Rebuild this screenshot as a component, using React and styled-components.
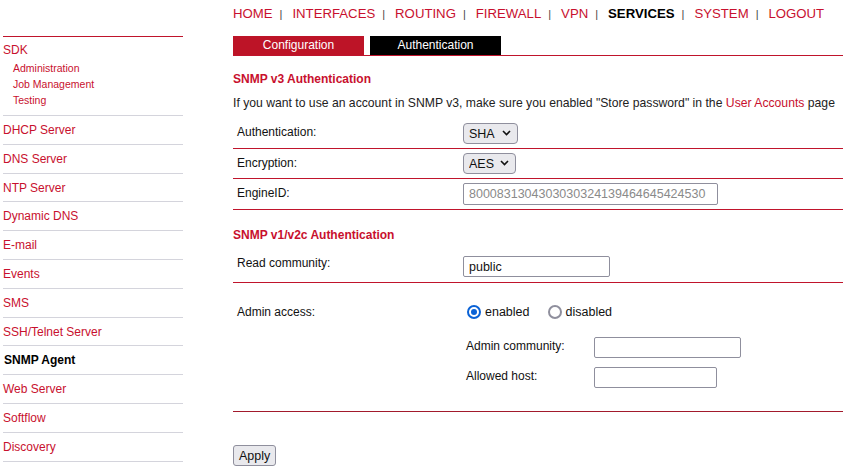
import React from "react";
import styled, { createGlobalStyle } from "styled-components";

const RED = "#c8102e";
const LINE = "#c0142c";

const Global = createGlobalStyle`
  html, body { margin: 0; padding: 0; background: #fff; }
  body { font-family: "Liberation Sans", Arial, sans-serif; color: #111; }
  * { box-sizing: border-box; }
`;

const Page = styled.div`
  display: flex;
  align-items: flex-start;
  padding-left: 3px;
  width: 843px;
  height: 471px;
  overflow: hidden;
`;

const Sidebar = styled.nav`
  width: 180px;
  flex: none;
  margin-top: 36px;
  border-top: 1px solid ${LINE};
`;

const Group = styled.div`
  padding: 4px 0 7px;
  border-bottom: 1px solid #d4d4dc;
`;

const GroupTitle = styled.div`
  font-size: 12px;
  line-height: 18px;
  color: ${RED};
  margin-bottom: 1px;
`;

const SubItem = styled.div`
  font-size: 10.5px;
  line-height: 16px;
  padding-left: 10px;
  color: ${RED};
`;

const SideItem = styled.div`
  height: 28.8px;
  line-height: 28px;
  font-size: 12px;
  border-bottom: 1px solid #d4d4dc;
  color: ${(p) => (p.$active ? "#000" : RED)};
  font-weight: ${(p) => (p.$active ? "bold" : "normal")};
  padding-left: ${(p) => (p.$active ? "1px" : "0")};
`;

const Main = styled.main`
  flex: 1;
  margin-left: 50px;
`;

const TopNav = styled.div`
  display: flex;
  align-items: center;
  height: 28px;
  font-size: 13.2px;
  padding-bottom: 1px;
`;

const NavLink = styled.span`
  color: ${(p) => (p.$active ? "#000" : RED)};
  font-weight: ${(p) => (p.$active ? "bold" : "normal")};
`;

const NavSep = styled.span`
  color: #444;
  font-size: 11px;
  margin: 0 10px 0 7px;
`;

const Tabs = styled.div`
  display: flex;
  gap: 6px;
  margin-top: 8px;
  border-bottom: 1px solid ${LINE};
`;

const Tab = styled.div`
  width: 131px;
  height: 19px;
  line-height: 18px;
  text-align: center;
  color: #fff;
  font-size: 12px;
  background: ${(p) => (p.$active ? "#000" : "#bd1427")};
`;

const SectionTitle = styled.div`
  font-size: 12px;
  font-weight: bold;
  color: ${RED};
  line-height: 16px;
  margin-top: ${(p) => p.$mt}px;
`;

const Desc = styled.div`
  font-size: 12.2px;
  color: #222;
  line-height: 16px;
  margin-top: 8px;
  white-space: nowrap;
`;

const DescLink = styled.span`
  color: ${RED};
`;

const Table = styled.div`
  margin-top: 7px;
`;

const Row = styled.div`
  display: flex;
  align-items: flex-start;
  height: ${(p) => p.$h || 31}px;
  border-bottom: ${(p) => (p.$noLine ? "none" : `1px solid ${LINE}`)};
  padding-top: ${(p) => p.$pt ?? 5}px;
`;

const Label = styled.div`
  width: 230px;
  padding-left: 4px;
  padding-top: ${(p) => p.$pt ?? 0}px;
  font-size: 12px;
  line-height: 14px;
  color: #111;
`;

const Control = styled.div`
  display: flex;
  align-items: center;
`;

const SelectWrap = styled.div`
  position: relative;
  width: ${(p) => p.$w}px;
  height: 21px;
`;

const Select = styled.select`
  appearance: none;
  -webkit-appearance: none;
  width: 100%;
  height: 100%;
  margin: 0;
  padding: 0 0 0 5px;
  font-family: "Liberation Sans", Arial, sans-serif;
  font-size: 12.5px;
  color: #111;
  background: #e9e9ed;
  border: 1px solid #8f8f9d;
  border-radius: 4px;
`;

const Chevron = styled.svg`
  position: absolute;
  right: 7px;
  top: 7px;
  pointer-events: none;
`;

const TextInput = styled.input`
  width: ${(p) => p.$w}px;
  height: ${(p) => p.$h || 21}px;
  margin: 0;
  padding: 0 5px;
  border: 1px solid #8f8f9d;
  border-radius: 2px;
  font-family: "Liberation Sans", Arial, sans-serif;
  font-size: 12.5px;
  color: ${(p) => (p.$muted ? "#8a8a8a" : "#111")};
  background: #fff;
  outline: none;
`;

const RadioGroup = styled.div`
  display: flex;
  align-items: center;
  padding-left: 4px;
  gap: 18px;
`;

const RadioOption = styled.label`
  display: flex;
  align-items: center;
  gap: 4px;
  font-size: 12.5px;
  color: #111;
`;

const RadioCircle = styled.span`
  width: 14px;
  height: 14px;
  border-radius: 50%;
  border: 2px solid ${(p) => (p.$on ? "#0a62d6" : "#8f8f9d")};
  display: flex;
  align-items: center;
  justify-content: center;
  &::after {
    content: "";
    width: 6px;
    height: 6px;
    border-radius: 50%;
    background: ${(p) => (p.$on ? "#0a62d6" : "transparent")};
  }
`;

const SubForm = styled.div`
  padding-left: 233px;
  padding-top: 16px;
  display: flex;
  flex-direction: column;
  gap: 9px;
`;

const SubRow = styled.div`
  display: flex;
  align-items: flex-start;
`;

const SubLabel = styled.div`
  width: 128px;
  font-size: 12px;
  line-height: 14px;
  padding-top: 2px;
  color: #111;
`;

const Divider = styled.div`
  border-top: 1px solid #a21a2c;
  margin-top: 23px;
`;

const ApplyButton = styled.button`
  margin-top: 33px;
  height: 21px;
  padding: 0 5px;
  font-family: "Liberation Sans", Arial, sans-serif;
  font-size: 12.5px;
  color: #111;
  background: #e9e9ed;
  border: 1px solid #8f8f9d;
  border-radius: 3px;
`;

const ChevronIcon = () => (
  <Chevron width="9" height="6" viewBox="0 0 9 6">
    <path d="M1 1 L4.5 4.5 L8 1" fill="none" stroke="#111" strokeWidth="1.6" />
  </Chevron>
);

const navItems = ["HOME", "INTERFACES", "ROUTING", "FIREWALL", "VPN", "SERVICES", "SYSTEM", "LOGOUT"];
const sideItems = [
  "DHCP Server",
  "DNS Server",
  "NTP Server",
  "Dynamic DNS",
  "E-mail",
  "Events",
  "SMS",
  "SSH/Telnet Server",
  "SNMP Agent",
  "Web Server",
  "Softflow",
  "Discovery",
];

export default function App() {
  return (
    <>
      <Global />
      <Page>
        <Sidebar>
          <Group>
            <GroupTitle>SDK</GroupTitle>
            <SubItem>Administration</SubItem>
            <SubItem>Job Management</SubItem>
            <SubItem>Testing</SubItem>
          </Group>
          {sideItems.map((s) => (
            <SideItem key={s} $active={s === "SNMP Agent"}>
              {s}
            </SideItem>
          ))}
        </Sidebar>
        <Main>
          <TopNav>
            {navItems.map((n, i) => (
              <React.Fragment key={n}>
                <NavLink $active={n === "SERVICES"}>{n}</NavLink>
                {i < navItems.length - 1 && <NavSep>|</NavSep>}
              </React.Fragment>
            ))}
          </TopNav>
          <Tabs>
            <Tab>Configuration</Tab>
            <Tab $active>Authentication</Tab>
          </Tabs>

          <SectionTitle $mt={15}>SNMP v3 Authentication</SectionTitle>
          <Desc>
            If you want to use an account in SNMP v3, make sure you enabled "Store password" in the{" "}
            <DescLink>User Accounts</DescLink> page
          </Desc>

          <Table>
            <Row $pt={5}>
              <Label $pt={2}>Authentication:</Label>
              <Control>
                <SelectWrap $w={55}>
                  <Select defaultValue="SHA">
                    <option>SHA</option>
                    <option>MD5</option>
                  </Select>
                  <ChevronIcon />
                </SelectWrap>
              </Control>
            </Row>
            <Row $h={30} $pt={4}>
              <Label $pt={3}>Encryption:</Label>
              <Control>
                <SelectWrap $w={53}>
                  <Select defaultValue="AES">
                    <option>AES</option>
                    <option>DES</option>
                  </Select>
                  <ChevronIcon />
                </SelectWrap>
              </Control>
            </Row>
            <Row $h={31} $pt={4}>
              <Label $pt={3}>EngineID:</Label>
              <Control>
                <TextInput $w={255} $h={22} $muted readOnly value="8000831304303030324139464645424530" />
              </Control>
            </Row>

            <SectionTitle $mt={17}>SNMP v1/v2c Authentication</SectionTitle>
            <Row $h={40} $pt={13}>
              <Label $pt={0}>Read community:</Label>
              <Control>
                <TextInput $w={147} readOnly value="public" />
              </Control>
            </Row>

            <Row $h={38} $pt={22} $noLine>
              <Label>Admin access:</Label>
              <RadioGroup>
                <RadioOption>
                  <RadioCircle $on />
                  enabled
                </RadioOption>
                <RadioOption>
                  <RadioCircle />
                  disabled
                </RadioOption>
              </RadioGroup>
            </Row>
            <SubForm>
              <SubRow>
                <SubLabel>Admin community:</SubLabel>
                <TextInput $w={147} readOnly value="" />
              </SubRow>
              <SubRow>
                <SubLabel>Allowed host:</SubLabel>
                <TextInput $w={123} readOnly value="" />
              </SubRow>
            </SubForm>
            <Divider />
          </Table>
          <ApplyButton>Apply</ApplyButton>
        </Main>
      </Page>
    </>
  );
}
